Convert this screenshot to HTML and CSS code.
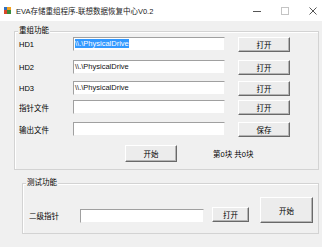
FILE: index.html
```html
<!DOCTYPE html>
<html lang="zh-CN">
<head>
    <meta charset="UTF-8" />
    <title>EVA存储重组程序</title>
    <link rel="stylesheet" href="styles.css">
</head>
<body>
    <div class="window">
        <div class="titlebar">
            <svg class="app-icon" width="7" height="7" viewBox="0 0 7 7">
                <rect x="0" y="3" width="3" height="4" fill="#d9472b" />
                <rect x="3" y="0" width="4" height="3" fill="#f0a020" />
                <rect x="3" y="3" width="4" height="4" fill="#3a8a3a" />
                <rect x="0" y="0" width="3" height="3" fill="#2f6fc0" />
            </svg>
            <span class="title">EVA存储重组程序-联想数据恢复中心V0.2</span>
            <div class="controls">
                <svg width="8" height="8" viewBox="0 0 8 8"><line x1="0" y1="4.5" x2="8" y2="4.5" stroke="#555" /></svg>
                <svg width="8" height="8" viewBox="0 0 8 8"><rect x="0.5" y="0.5" width="7" height="7" fill="none" stroke="#c4c4c4" /></svg>
                <svg width="8" height="8" viewBox="0 0 8 8"><path d="M0.5 0.5 L7.5 7.5 M7.5 0.5 L0.5 7.5" stroke="#555" /></svg>
            </div>
        </div>

        <div class="client">
            <div class="group group-main">
                <span class="group-title">重组功能</span>
                <div class="rows">
                    <div class="row">
                        <span class="label">HD1</span>
                        <div class="field"><span class="selected">\\.\PhysicalDrive</span></div>
                        <button class="btn">打开</button>
                    </div>
                    <div class="row">
                        <span class="label">HD2</span>
                        <div class="field">\\.\PhysicalDrive</div>
                        <button class="btn">打开</button>
                    </div>
                    <div class="row">
                        <span class="label">HD3</span>
                        <div class="field">\\.\PhysicalDrive</div>
                        <button class="btn">打开</button>
                    </div>
                    <div class="row">
                        <span class="label">指针文件</span>
                        <div class="field"></div>
                        <button class="btn">打开</button>
                    </div>
                    <div class="row">
                        <span class="label">输出文件</span>
                        <div class="field"></div>
                        <button class="btn">保存</button>
                    </div>
                </div>
                <div class="action-row">
                    <button class="btn btn-start">开始</button>
                    <span class="status">第0块 共0块</span>
                </div>
            </div>

            <div class="group group-test">
                <span class="group-title">测试功能</span>
                <div class="test-row">
                    <span class="label label-test">二级指针</span>
                    <div class="field field-test"></div>
                    <button class="btn btn-small">打开</button>
                    <button class="btn btn-big">开始</button>
                </div>
            </div>
        </div>
    </div>
</body>
</html>
```

FILE: styles.css
```css
body {
    margin: 0;
    font-family: "Liberation Sans", "Noto Sans CJK SC", sans-serif;
    font-size: 7.5px;
    color: #000;
    background: #f0f0f0;
}
.window {
    width: 322px;
    height: 247px;
    background: #f0f0f0;
    overflow: hidden;
}
.titlebar {
    height: 21px;
    background: #fff;
    display: flex;
    align-items: center;
    padding-left: 4px;
    box-sizing: border-box;
}
.app-icon {
    margin-right: 5px;
}
.title {
    font-size: 7.5px;
    color: #222;
}
.controls {
    margin-left: auto;
    display: flex;
    gap: 20px;
    padding-right: 5px;
}
.client {
    padding-top: 10px;
}
.group {
    position: relative;
    border: 1px solid #d3d3d3;
    box-shadow: inset 1px 1px 0 #fff;
    box-sizing: border-box;
}
.group-title {
    position: absolute;
    top: -6px;
    left: 3px;
    padding: 0 1px;
    background: #f0f0f0;
    line-height: 10px;
}
.group-main {
    margin-left: 14px;
    width: 305px;
    height: 139px;
    padding: 5px 0 0 4px;
}
.rows {
    display: flex;
    flex-direction: column;
}
.row {
    display: flex;
    align-items: center;
    height: 14px;
}
.row:nth-child(2) { margin-top: 9px; }
.row:nth-child(3) { margin-top: 7px; }
.row:nth-child(4) { margin-top: 5px; }
.row:nth-child(5) { margin-top: 8px; }
.label {
    width: 54px;
}
.field {
    width: 152px;
    height: 14px;
    box-sizing: border-box;
    background: #fff;
    border: 1px solid;
    border-color: #a0a0a0 #f0f0f0 #f0f0f0 #a0a0a0;
    padding: 1px 0 0 1px;
    line-height: 10px;
    white-space: nowrap;
    color: #111;
}
.selected {
    background: #3399ff;
    color: #fff;
}
.btn {
    font: inherit;
    width: 52px;
    height: 15px;
    margin-left: 13px;
    padding: 0;
    background: #ececec;
    border: 1px solid;
    border-color: #fff #696969 #696969 #fff;
    box-shadow: inset -1px -1px 0 #b4b4b4;
    color: #000;
}
.action-row {
    display: flex;
    align-items: center;
    margin-top: 9px;
}
.btn-start {
    margin-left: 106px;
    height: 17px;
}
.status {
    margin-left: 36px;
}
.group-test {
    margin: 13px 0 0 22px;
    width: 297px;
    height: 51px;
    padding: 13px 0 0 6px;
}
.test-row {
    display: flex;
    align-items: flex-end;
}
.label-test {
    width: 51px;
    align-self: center;
    margin-top: 10px;
}
.field-test {
    width: 124px;
}
.btn-small {
    width: 37px;
    margin-left: 8px;
    margin-bottom: 1px;
}
.btn-big {
    width: 53px;
    height: 26px;
    margin-left: 11px;
}
```
